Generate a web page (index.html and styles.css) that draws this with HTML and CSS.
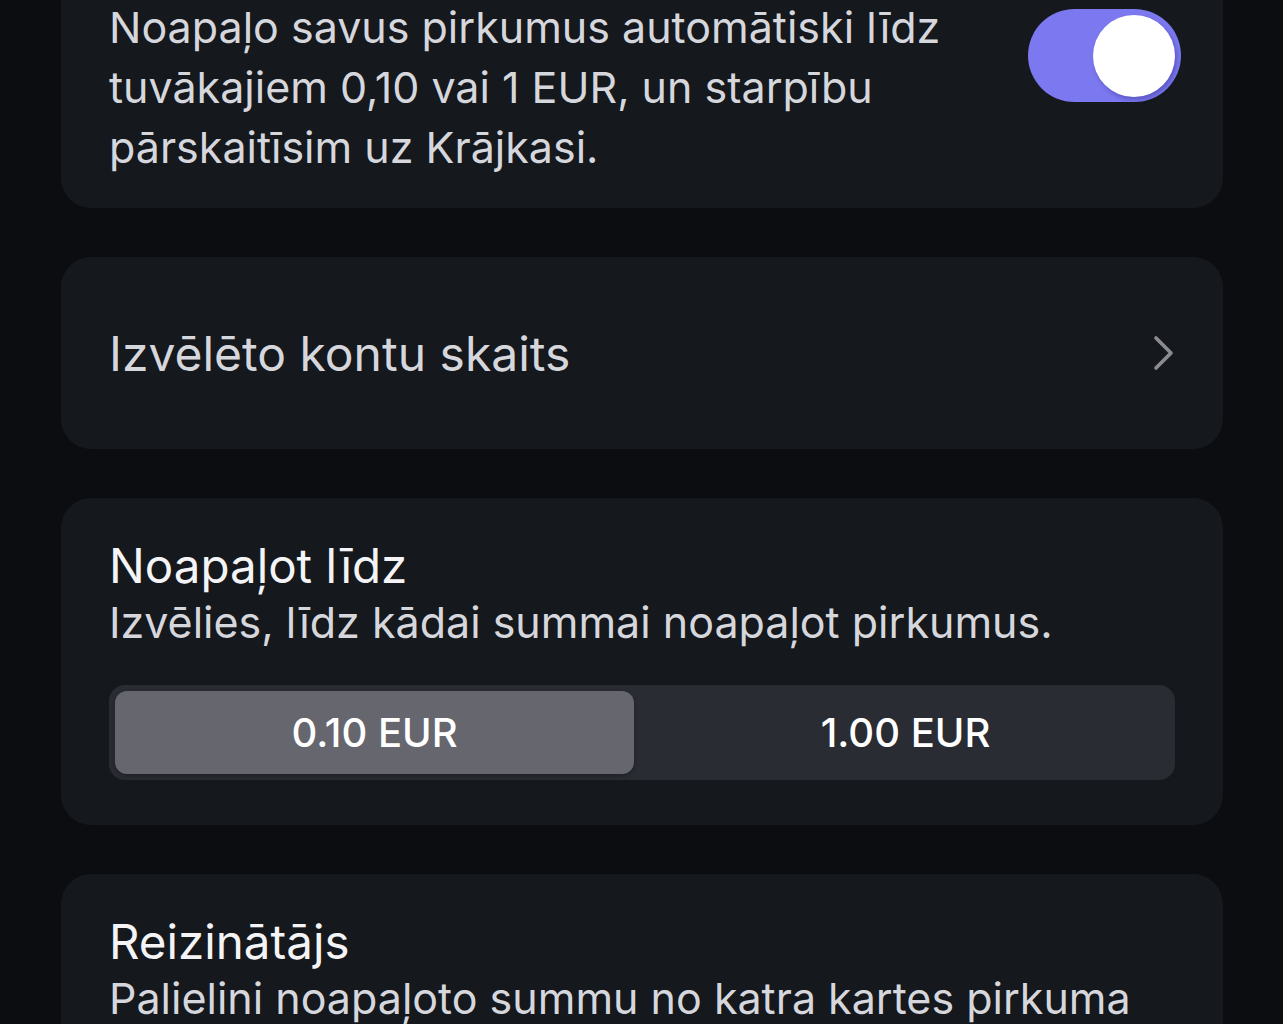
FILE: index.html
```html
<!DOCTYPE html>
<html lang="lv">
<head>
<meta charset="utf-8">
<title>Noapaļošana</title>
<link rel="stylesheet" href="styles.css">
</head>
<body>
<main class="list">
  <section class="card card-toggle">
    <p class="desc">Noapaļo savus pirkumus automātiski līdz<br>tuvākajiem 0,10 vai 1 EUR, un starpību<br>pārskaitīsim uz Krājkasi.</p>
    <div class="switch" role="switch" aria-checked="true"><span class="knob"></span></div>
  </section>

  <section class="card card-link">
    <span class="link-label">Izvēlēto kontu skaits</span>
    <svg class="chevron" width="24" height="36" viewBox="0 0 24 36" aria-hidden="true">
      <path d="M4 3 L19 18 L4 33" fill="none" stroke="#8b8b90" stroke-width="3.6" stroke-linecap="round" stroke-linejoin="round"/>
    </svg>
  </section>

  <section class="card card-section">
    <h2 class="title">Noapaļot līdz</h2>
    <p class="subtitle">Izvēlies, līdz kādai summai noapaļot pirkumus.</p>
    <div class="segmented">
      <button class="seg seg-active">0.10 EUR</button>
      <button class="seg">1.00 EUR</button>
    </div>
  </section>

  <section class="card card-section">
    <h2 class="title">Reizinātājs</h2>
    <p class="subtitle">Palielini noapaļoto summu no katra kartes pirkuma</p>
  </section>
</main>
</body>
</html>
```
FILE: styles.css
```css
* { box-sizing: border-box; }

html, body {
  margin: 0;
  padding: 0;
  background: #0b0d11;
  overflow: hidden;
}

body {
  font-family: Inter, "Noto Sans", "Liberation Sans", sans-serif;
  color: #d5d7dc;
  -webkit-font-smoothing: antialiased;
}

.list {
  display: flex;
  flex-direction: column;
  gap: 49px;
  padding: 0 60px 0 61px;
  margin-top: -51px;
}

.card {
  background: #15181c;
  border-radius: 30px;
  padding: 0 48px;
}

.card-toggle {
  display: flex;
  align-items: flex-start;
  justify-content: space-between;
  padding-top: 48px;
  padding-bottom: 31px;
  padding-right: 42px;
}

.desc {
  margin: 0;
  font-size: 43px;
  line-height: 60px;
  color: #d5d7dc;
  white-space: nowrap;
}

.switch {
  flex: none;
  width: 153px;
  height: 93px;
  margin-top: 12px;
  border-radius: 47px;
  background: #7b78f0;
  display: flex;
  align-items: center;
  justify-content: flex-end;
  padding-right: 6px;
}

.knob {
  width: 82px;
  height: 82px;
  border-radius: 50%;
  background: #ffffff;
  box-shadow: 2px 3px 4px rgba(40, 30, 120, 0.35);
}

.card-link {
  height: 192px;
  display: flex;
  align-items: center;
  justify-content: space-between;
  padding-right: 47px;
}

.link-label {
  font-size: 48px;
  color: #d5d7dc;
}

.chevron { display: block; }

.card-section {
  padding-top: 40px;
  padding-bottom: 45px;
}

.title {
  margin: 0;
  font-size: 47.5px;
  font-weight: 400;
  line-height: 56px;
  color: #f4f4f6;
}

.subtitle {
  margin: 0;
  font-size: 43px;
  line-height: 56px;
  color: #d5d7dc;
  white-space: nowrap;
}

.segmented {
  margin-top: 35px;
  display: grid;
  grid-template-columns: 1fr 1fr;
  background: #2a2c33;
  border-radius: 16px;
  padding: 6px;
  height: 95px;
}

.seg {
  border: 0;
  background: transparent;
  font-family: inherit;
  font-size: 40px;
  font-weight: 500;
  color: #ffffff;
  border-radius: 12px;
  padding: 0;
}

.seg-active {
  margin-right: 8px;
  background: #66666f;
  box-shadow: 0 2px 4px rgba(0, 0, 0, 0.25);
}
```
